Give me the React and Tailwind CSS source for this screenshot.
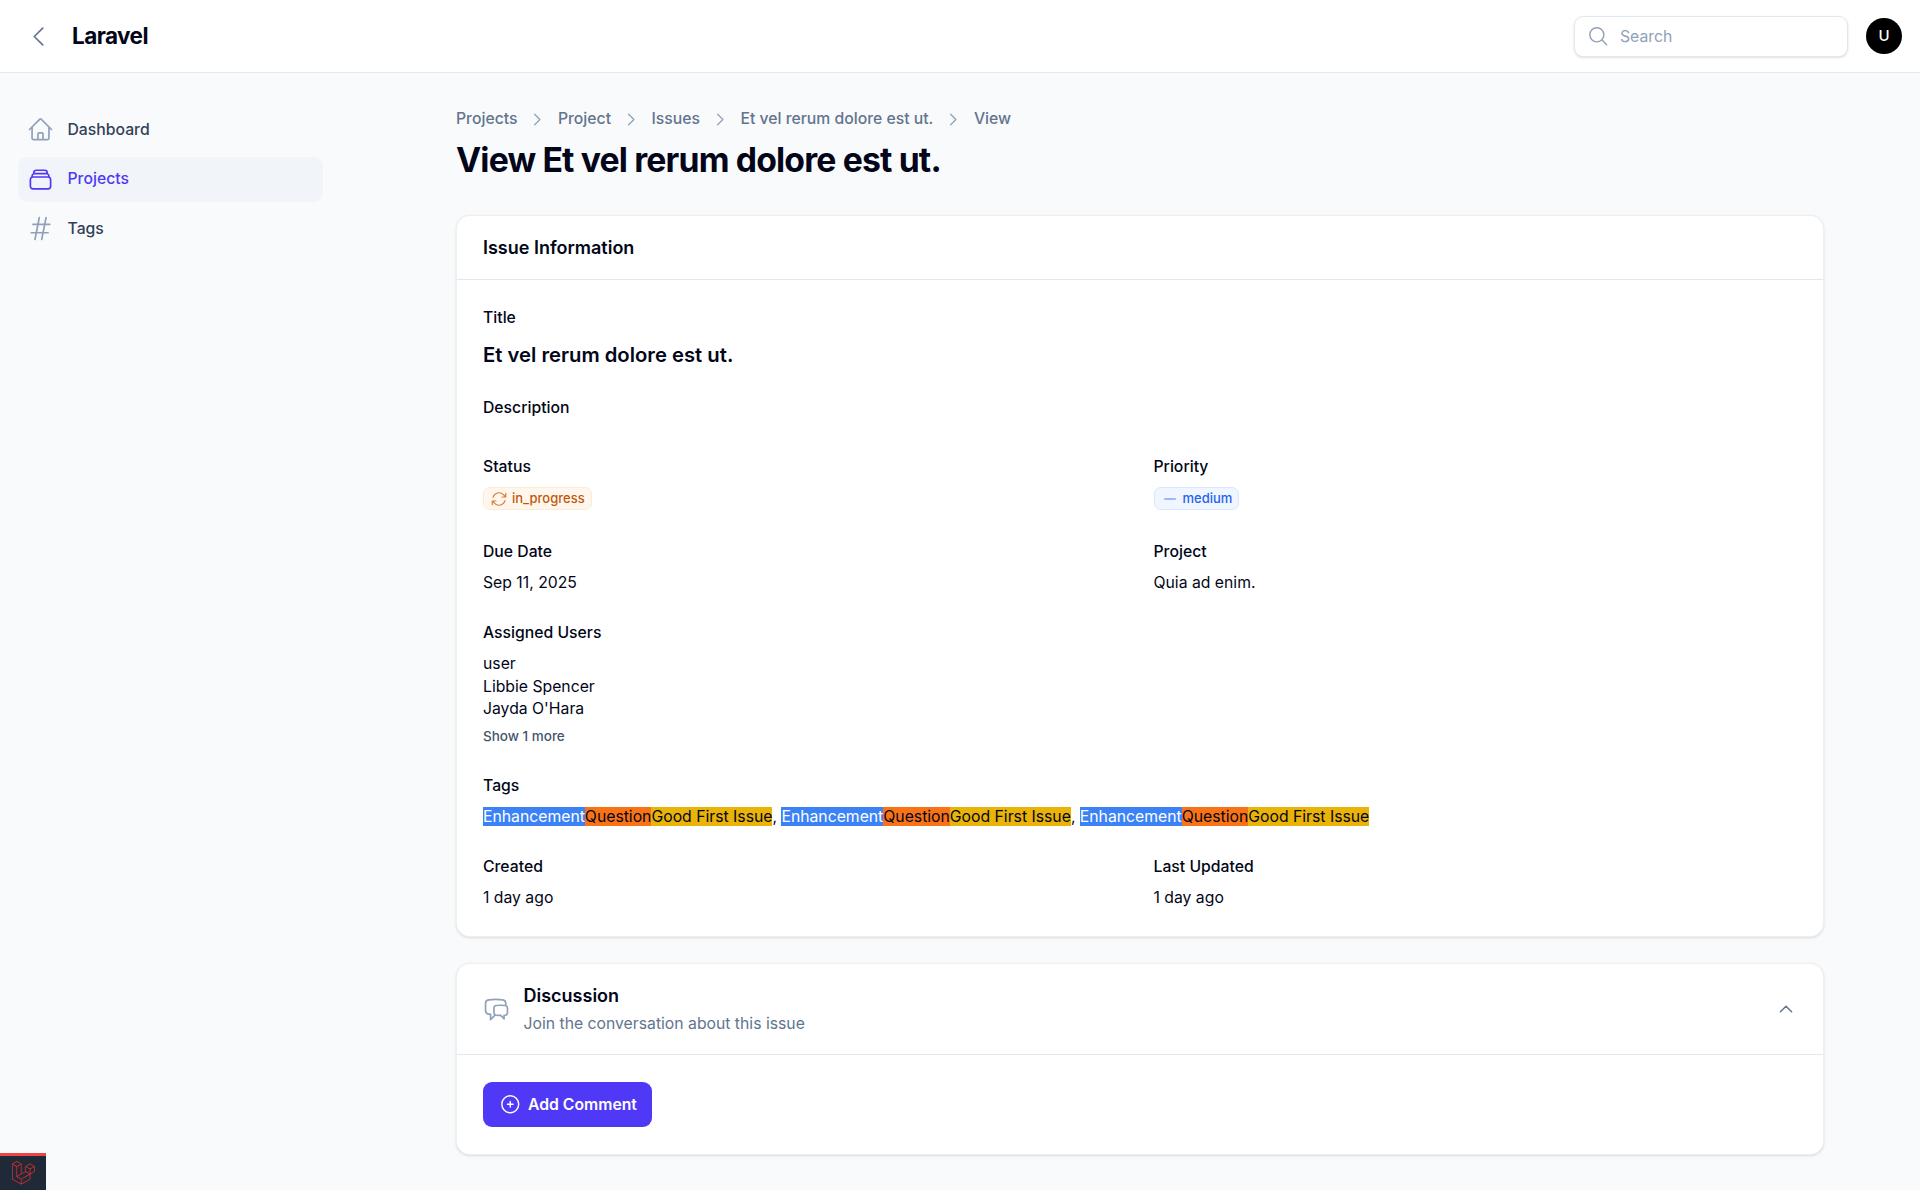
const icons = {
  home: 'm2.25 12 8.954-8.955c.44-.439 1.152-.439 1.591 0L21.75 12M4.5 9.75v10.125c0 .621.504 1.125 1.125 1.125H9.75v-4.875c0-.621.504-1.125 1.125-1.125h2.25c.621 0 1.125.504 1.125 1.125V21h4.125c.621 0 1.125-.504 1.125-1.125V9.75M8.25 21h8.25',
  stack: 'M6 6.878V6a2.25 2.25 0 0 1 2.25-2.25h7.5A2.25 2.25 0 0 1 18 6v.878m-12 0c.235-.083.487-.128.75-.128h10.5c.263 0 .515.045.75.128m-12 0A2.25 2.25 0 0 0 4.5 9v.878m13.5-3A2.25 2.25 0 0 1 19.5 9v.878m0 0a2.246 2.246 0 0 0-.75-.128H5.25c-.263 0-.515.045-.75.128m15 0A2.25 2.25 0 0 1 21 12v6a2.25 2.25 0 0 1-2.25 2.25H5.25A2.25 2.25 0 0 1 3 18v-6c0-.98.626-1.813 1.5-2.122',
  hash: 'M5.25 8.25h15m-16.5 7.5h15m-1.8-13.5-3.9 19.5m-2.1-19.5-3.9 19.5',
  chat: 'M20.25 8.511c.884.284 1.5 1.128 1.5 2.097v4.286c0 1.136-.847 2.1-1.98 2.193-.34.027-.68.052-1.02.072v3.091l-3-3c-1.354 0-2.694-.055-4.02-.163a2.115 2.115 0 0 1-.825-.242m9.345-8.334a2.126 2.126 0 0 0-.476-.095 48.64 48.64 0 0 0-8.048 0c-1.131.094-1.976 1.057-1.976 2.192v4.286c0 .837.46 1.58 1.155 1.951m9.345-8.334V6.637c0-1.621-1.152-3.026-2.76-3.235A48.455 48.455 0 0 0 11.25 3c-2.115 0-4.198.137-6.24.402-1.608.209-2.76 1.614-2.76 3.235v6.226c0 1.621 1.152 3.026 2.76 3.235.577.075 1.157.14 1.74.194V21l4.155-4.155',
  plus: 'M12 9v6m3-3H9m12 0a9 9 0 1 1-18 0 9 9 0 0 1 18 0Z',
  sync: 'M16.023 9.348h4.992v-.001M2.985 19.644v-4.992m0 0h4.992m-4.993 0 3.181 3.183a8.25 8.25 0 0 0 13.803-3.7M4.031 9.865a8.25 8.25 0 0 1 13.803-3.7l3.181 3.182m0-4.991v4.99',
  minus: 'M5 12h14',
  left: 'M15.75 19.5 8.25 12l7.5-7.5',
  right: 'm8.25 4.5 7.5 7.5-7.5 7.5',
  up: 'm4.5 15.75 7.5-7.5 7.5 7.5',
  search: 'm21 21-5.197-5.197m0 0A7.5 7.5 0 1 0 5.196 5.196a7.5 7.5 0 0 0 10.607 10.607Z',
}

function Hero({ name, className, width = 1.5 }) {
  return (
    <svg viewBox="0 0 24 24" fill="none" stroke="currentColor" strokeWidth={width} strokeLinecap="round" strokeLinejoin="round" className={className}>
      <path d={icons[name]} />
    </svg>
  )
}

function NavItem({ icon, label, active }) {
  return (
    <a className={`flex items-center gap-[13.5px] h-[45px] px-[9px] rounded-[9px] text-[15.75px] font-medium ${active ? 'bg-[#f1f4f9] text-indigo-600' : 'text-slate-700'}`}>
      <Hero name={icon} className={`w-[27px] h-[27px] shrink-0 ${active ? 'text-indigo-600' : 'text-slate-400'}`} />
      <span>{label}</span>
    </a>
  )
}

function Label({ children }) {
  return <div className="text-[15.75px] leading-[22.5px] font-medium text-slate-950">{children}</div>
}

function Entry({ label, children }) {
  return (
    <div>
      <Label>{label}</Label>
      <div className="mt-[8.5px] pb-[0.5px] text-[15.75px] leading-[22.5px] text-slate-950">{children}</div>
    </div>
  )
}

function Tags() {
  return (
    <>
      <span className="bg-[#3b82f6] text-white">Enhancement</span>
      <span className="bg-[#f97316]">Question</span>
      <span className="bg-[#eab308]">Good First Issue</span>
    </>
  )
}

const crumbs = ['Projects', 'Project', 'Issues', 'Et vel rerum dolore est ut.', 'View']

export default function App() {
  return (
    <div className="min-h-[1190px] bg-[#f9fafc] font-['Inter',sans-serif] text-slate-950">
      <header className="h-[73px] bg-white border-b border-slate-200 flex items-center pl-[25px] pr-[18px]">
        <Hero name="left" className="w-[27px] h-[27px] text-slate-500" />
        <span className="ml-[20px] text-[22.5px] font-bold tracking-tight text-slate-950">Laravel</span>
        <div className="ml-auto flex items-center gap-[18px]">
          <div className="w-[274px] h-[41px] rounded-[9px] bg-white border border-slate-200 shadow-sm flex items-center pl-[12px] gap-[10.5px] text-slate-400">
            <Hero name="search" className="w-[22.5px] h-[22.5px]" />
            <span className="text-[15.75px] mt-[2px]">Search</span>
          </div>
          <div className="w-9 h-9 rounded-full bg-black text-white text-[15px] font-medium flex items-center justify-center">U</div>
        </div>
      </header>

      <div className="flex">
        <aside className="w-[456px] shrink-0 pl-[18px] pt-[34px]">
          <nav className="w-[305px] flex flex-col gap-[4.5px]">
            <NavItem icon="home" label="Dashboard" />
            <NavItem icon="stack" label="Projects" active />
            <NavItem icon="hash" label="Tags" />
          </nav>
        </aside>

        <main className="flex-1 pr-[96px] pt-[35px]">
          <nav className="flex items-center gap-[9px] text-[15.75px] leading-[22.5px] font-medium text-slate-500">
            {crumbs.map((c, i) => (
              <div key={c} className="flex items-center gap-[9px]">
                {i > 0 && <Hero name="right" width={1.75} className="w-[22.5px] h-[17px] text-slate-400" />}
                <span>{c}</span>
              </div>
            ))}
          </nav>
          <h1 className="mt-[9px] text-[33.75px] leading-[40.5px] font-bold tracking-tight text-slate-950">View Et vel rerum dolore est ut.</h1>

          <section className="mt-[35px] bg-white rounded-[13.5px] border border-[#0f172a12] shadow-sm">
            <div className="h-[64px] px-[26px] flex items-center border-b border-slate-200 text-[18px] font-semibold">Issue Information</div>
            <div className="px-[26px] pt-[27px] pb-[26px]">
              <div>
                <Label>Title</Label>
                <div className="mt-[9px] text-[20.25px] leading-[31.5px] font-semibold">Et vel rerum dolore est ut.</div>
              </div>
              <div className="mt-[27px]"><Label>Description</Label></div>
              <div className="mt-[36px] grid grid-cols-2 gap-x-[27px] gap-y-[27px]">
                <div>
                  <Label>Status</Label>
                  <div className="mt-[9px] h-[27px]">
                    <span className="inline-flex items-center gap-[4px] h-[23px] px-[6px] rounded-[6.75px] bg-[#fff7ed] border border-[#fdebd0] text-[13px] font-medium text-[#c2570c]">
                      <Hero name="sync" className="w-[18px] h-[18px] text-[#dd7a30]" />
                      in_progress
                    </span>
                  </div>
                </div>
                <div>
                  <Label>Priority</Label>
                  <div className="mt-[9px] h-[27px]">
                    <span className="inline-flex items-center gap-[4px] h-[23px] px-[6px] rounded-[6.75px] bg-[#eff6ff] border border-[#d9e7fe] text-[13px] font-medium text-[#2563eb]">
                      <Hero name="minus" width={2} className="w-[18px] h-[18px] text-[#7aa7fb]" />
                      medium
                    </span>
                  </div>
                </div>
                <Entry label="Due Date">Sep 11, 2025</Entry>
                <Entry label="Project">Quia ad enim.</Entry>
              </div>
              <div className="mt-[27px]">
                <Label>Assigned Users</Label>
                <div className="mt-[8.5px] pb-[0.5px] text-[15.75px] leading-[22.5px]">
                  <div>user</div>
                  <div>Libbie Spencer</div>
                  <div>Jayda O'Hara</div>
                </div>
                <div className="mt-[6px] text-[13.5px] leading-[18px] font-medium text-slate-600">Show 1 more</div>
              </div>
              <div className="mt-[30px]">
                <Label>Tags</Label>
                <div className="mt-[8px] text-[15.75px] leading-[22.5px]">
                  <Tags />, <Tags />, <Tags />
                </div>
              </div>
              <div className="mt-[28px] grid grid-cols-2 gap-x-[27px]">
                <Entry label="Created">1 day ago</Entry>
                <Entry label="Last Updated">1 day ago</Entry>
              </div>
            </div>
          </section>

          <section className="mt-[26px] bg-white rounded-[13.5px] border border-[#0f172a12] shadow-sm">
            <div className="h-[91px] px-[26px] flex items-center border-b border-slate-200">
              <Hero name="chat" className="w-[27px] h-[27px] text-slate-400 shrink-0" />
              <div className="ml-[13.5px]">
                <div className="text-[18px] leading-[27px] font-semibold">Discussion</div>
                <div className="mt-[4px] text-[15.75px] leading-[22.5px] text-slate-500">Join the conversation about this issue</div>
              </div>
              <Hero name="up" width={2} className="ml-auto mr-[2px] w-[18px] h-[18px] text-slate-500" />
            </div>
            <div className="px-[26px] py-[27px]">
              <button className="h-[45px] pl-[15.75px] pr-[15px] rounded-[9px] bg-indigo-600 text-white text-[15.75px] font-semibold flex items-center gap-[6.75px]">
                <Hero name="plus" className="w-[22.5px] h-[22.5px]" />
                Add Comment
              </button>
            </div>
          </section>
        </main>
      </div>

      <div className="fixed left-0 bottom-0 w-[46px] h-[37px] bg-[#1f2937] border-t-[3px] border-[#ef4444] flex items-center justify-center">
        <svg viewBox="0 0 50 52" className="w-[23px] h-[24px] fill-[#dc2f2f]">
          <path d="M49.626 11.564a.809.809 0 0 1 .028.209v10.972a.8.8 0 0 1-.402.694l-9.209 5.302V39.25c0 .286-.152.55-.4.694L20.42 51.01c-.044.025-.092.041-.14.058-.018.006-.035.017-.054.022a.805.805 0 0 1-.41 0c-.022-.006-.042-.018-.063-.026-.044-.016-.09-.03-.132-.054L.402 39.944A.801.801 0 0 1 0 39.25V6.334c0-.072.01-.142.028-.21.006-.023.02-.044.028-.067.015-.042.029-.085.051-.124.015-.026.037-.047.055-.071.023-.032.044-.065.071-.093.023-.023.053-.04.079-.06.029-.024.055-.05.088-.069h.001l9.61-5.533a.802.802 0 0 1 .8 0l9.61 5.533h.002c.032.02.059.045.088.068.026.02.055.038.078.06.028.029.048.062.072.094.017.024.04.045.054.071.023.04.036.082.052.124.008.023.022.044.028.068a.809.809 0 0 1 .028.209v20.559l8.008-4.611v-10.51c0-.07.01-.141.028-.208.007-.024.02-.045.028-.068.016-.042.03-.085.052-.124.015-.026.037-.047.054-.071.024-.032.044-.065.072-.093.023-.023.052-.04.078-.06.03-.024.056-.05.088-.069h.001l9.611-5.533a.801.801 0 0 1 .8 0l9.61 5.533c.034.02.06.045.09.068.025.02.054.038.077.06.028.029.048.062.072.094.018.024.04.045.054.071.023.039.036.082.052.124.009.023.022.044.028.068zm-1.574 10.718v-9.124l-3.363 1.936-4.646 2.675v9.124l8.01-4.611zm-9.61 16.505v-9.13l-4.57 2.61-13.05 7.448v9.216l17.62-10.144zM1.602 7.719v31.068L19.22 48.93v-9.214l-9.204-5.209-.003-.002-.004-.002c-.031-.018-.057-.044-.086-.066-.025-.02-.054-.036-.076-.058l-.002-.003c-.026-.025-.044-.056-.066-.084-.02-.027-.044-.05-.06-.078l-.001-.003c-.018-.03-.029-.066-.042-.1-.013-.03-.03-.058-.038-.09v-.001c-.01-.038-.012-.078-.016-.117-.004-.03-.012-.06-.012-.09v-.002-21.481L4.965 9.654 1.602 7.72zm8.81-5.994L2.405 6.334l8.005 4.609 8.006-4.61-8.006-4.608zm4.164 28.764l4.645-2.674V7.719l-3.363 1.936-4.646 2.675v20.096l3.364-1.937zM39.243 7.164l-8.006 4.609 8.006 4.609 8.005-4.61-8.005-4.608zm-.801 10.605l-4.646-2.675-3.363-1.936v9.124l4.645 2.674 3.364 1.937v-9.124zM20.02 38.33l11.743-6.704 5.87-3.35-8-4.606-9.211 5.303-8.395 4.833 7.993 4.524z" />
        </svg>
      </div>
    </div>
  )
}
